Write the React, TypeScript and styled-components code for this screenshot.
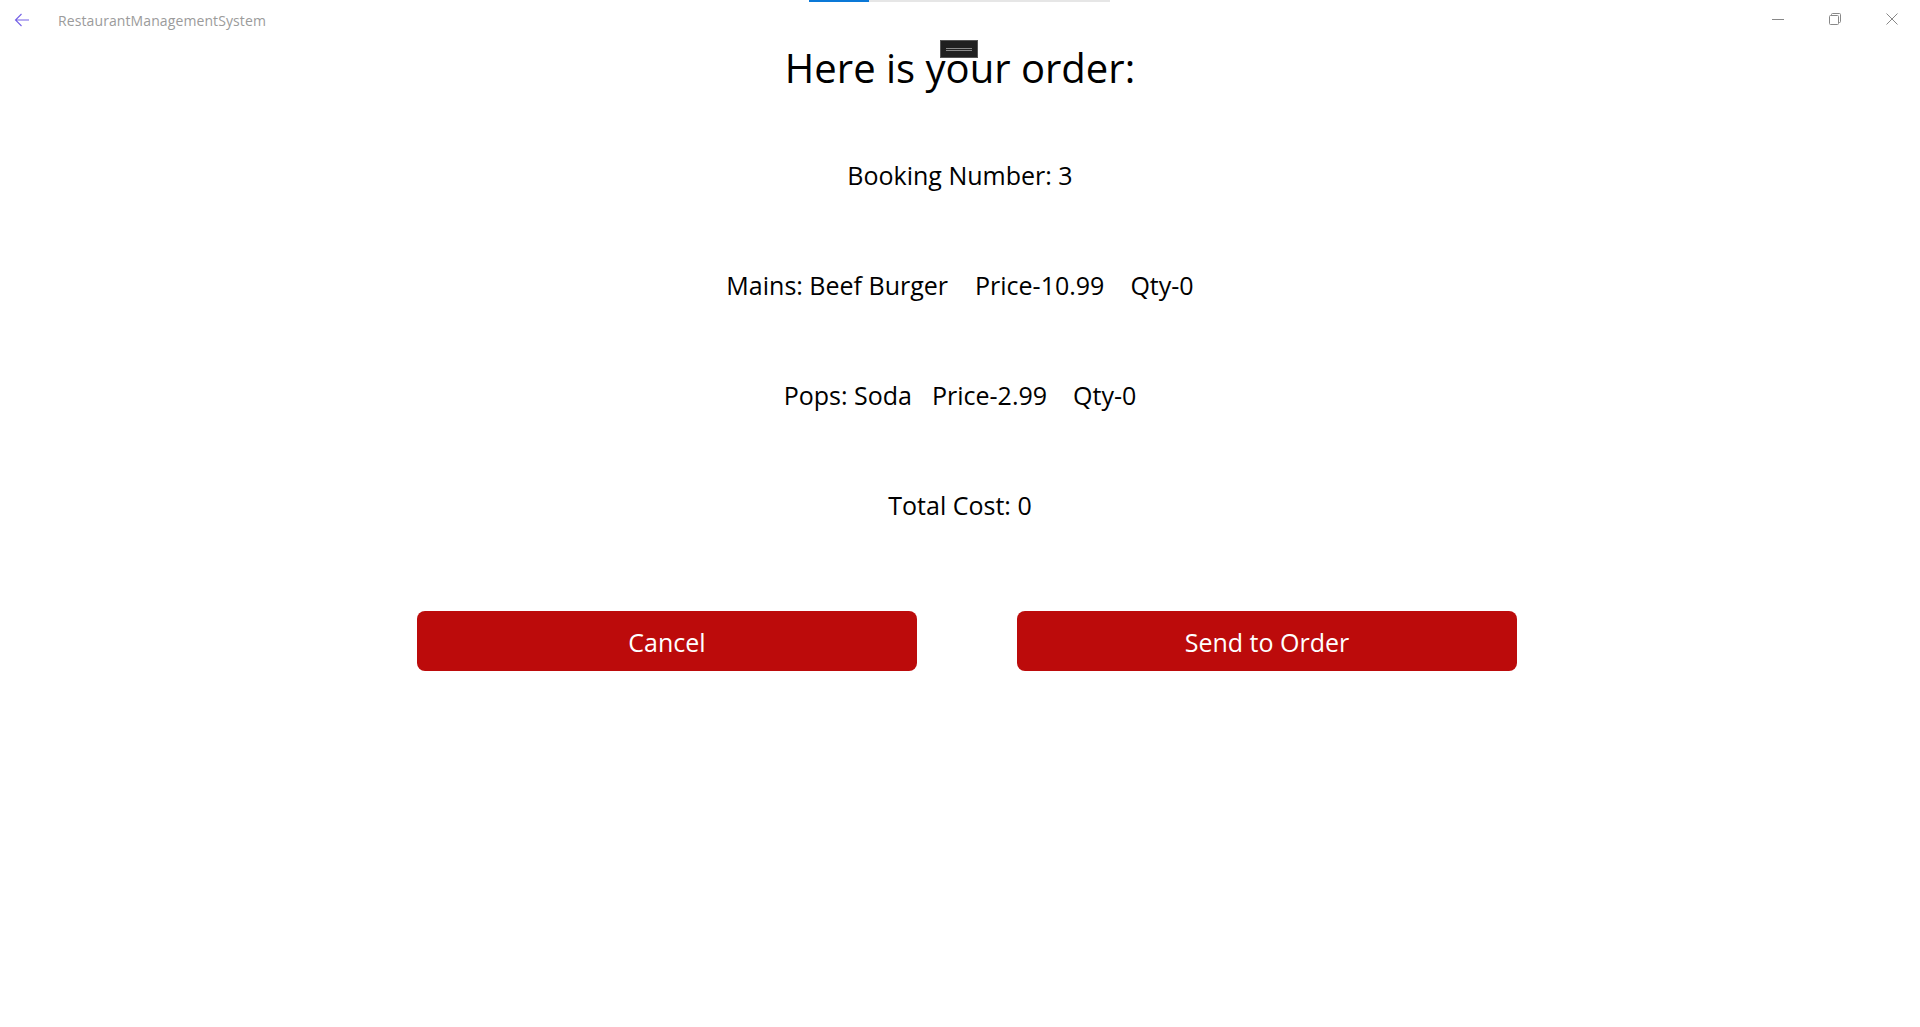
import styled, { createGlobalStyle } from 'styled-components';

const GlobalStyle = createGlobalStyle`
  html, body {
    margin: 0;
    padding: 0;
    background: #fff;
  }
  body {
    font-family: "Open Sans", "Noto Sans", sans-serif;
    color: #000;
  }
`;

const Window = styled.div`
  width: 1920px;
  height: 1027px;
  display: flex;
  flex-direction: column;
  background: #fff;
  overflow: hidden;
  position: relative;
`;

const TitleBar = styled.div`
  height: 40px;
  display: flex;
  align-items: center;
  flex-shrink: 0;
  position: relative;
`;

const BackButton = styled.div`
  width: 44px;
  height: 40px;
  display: flex;
  align-items: center;
  justify-content: center;
  margin-right: 14px;
  color: #7461e6;
`;

const AppName = styled.div`
  font-size: 14px;
  color: #9b9b9b;
  letter-spacing: 0.1px;
`;

const Controls = styled.div`
  margin-left: auto;
  display: flex;
  height: 38px;
  align-self: flex-start;
`;

const ControlButton = styled.div`
  width: 57px;
  height: 38px;
  display: flex;
  align-items: center;
  justify-content: center;
  color: #888;
`;

const LoadingTrack = styled.div`
  position: absolute;
  top: 0;
  left: 809px;
  width: 301px;
  height: 2px;
  background: #e6e6e6;
  .fill {
    width: 60px;
    height: 2px;
    background: #0a78d7;
  }
`;

const DragHandle = styled.div`
  position: absolute;
  top: 40px;
  left: 940px;
  width: 36px;
  height: 16px;
  background: #202020;
  border: 1px solid #555;
  display: flex;
  flex-direction: column;
  align-items: center;
  justify-content: center;
  gap: 1px;
  z-index: 1;
  span {
    display: block;
    width: 26px;
    height: 1px;
    background: #8a8a8a;
  }
`;

const Content = styled.div`
  display: flex;
  flex-direction: column;
  align-items: center;
`;

const Heading = styled.h1`
  margin: 0;
  font-size: 40px;
  font-weight: 400;
  line-height: 56px;
`;

const InfoList = styled.div`
  margin-top: 61px;
  display: flex;
  flex-direction: column;
  align-items: center;
  gap: 74px;
`;

const InfoRow = styled.div`
  display: flex;
  font-size: 25px;
  line-height: 36px;
  white-space: pre;
`;

const Segment = styled.span<{ $gap?: number }>`
  margin-left: ${(p) => p.$gap ?? 0}px;
`;

const ButtonRow = styled.div`
  margin-top: 88px;
  display: flex;
  gap: 100px;
  margin-left: 14px;
`;

const ActionButton = styled.button`
  width: 500px;
  height: 60px;
  border: none;
  border-radius: 8px;
  background: #bc0b0b;
  color: #fff;
  font-family: "Open Sans", "Noto Sans", sans-serif;
  font-size: 25px;
  padding: 2px 0 0;
  cursor: pointer;
`;

const rows: { label: string; gap: number }[][] = [
  [{ label: 'Booking Number: 3', gap: 0 }],
  [
    { label: 'Mains: Beef Burger', gap: 0 },
    { label: 'Price-10.99', gap: 27 },
    { label: 'Qty-0', gap: 26 }
  ],
  [
    { label: 'Pops: Soda', gap: 0 },
    { label: 'Price-2.99', gap: 20 },
    { label: 'Qty-0', gap: 26 }
  ],
  [{ label: 'Total Cost: 0', gap: 0 }]
];

const App: React.FC = () => {
  return (
    <Window>
      <GlobalStyle />
      <LoadingTrack>
        <div className="fill" />
      </LoadingTrack>
      <DragHandle>
        <span />
        <span />
      </DragHandle>
      <TitleBar>
        <BackButton>
          <svg width="16" height="16" viewBox="0 0 16 16" fill="none" stroke="currentColor" strokeWidth="1.1">
            <path d="M15 8H1.5M7.5 2L1.5 8l6 6" />
          </svg>
        </BackButton>
        <AppName>RestaurantManagementSystem</AppName>
        <Controls>
          <ControlButton>
            <svg width="12" height="12" viewBox="0 0 12 12" stroke="currentColor" strokeWidth="1">
              <path d="M0 6.5h12" />
            </svg>
          </ControlButton>
          <ControlButton>
            <svg width="12" height="12" viewBox="0 0 12 12" fill="none" stroke="currentColor" strokeWidth="1">
              <rect x="0.5" y="2.5" width="9" height="9" rx="1" />
              <path d="M2.5 2.5V1.5a1 1 0 0 1 1-1h7a1 1 0 0 1 1 1v7a1 1 0 0 1-1 1h-1" />
            </svg>
          </ControlButton>
          <ControlButton>
            <svg width="12" height="12" viewBox="0 0 12 12" stroke="currentColor" strokeWidth="1">
              <path d="M0.5 0.5l11 11M11.5 0.5l-11 11" />
            </svg>
          </ControlButton>
        </Controls>
      </TitleBar>
      <Content>
        <Heading>Here is your order:</Heading>
        <InfoList>
          {rows.map((row, i) => (
            <InfoRow key={i}>
              {row.map((seg, j) => (
                <Segment key={j} $gap={seg.gap}>
                  {seg.label}
                </Segment>
              ))}
            </InfoRow>
          ))}
        </InfoList>
        <ButtonRow>
          <ActionButton>Cancel</ActionButton>
          <ActionButton>Send to Order</ActionButton>
        </ButtonRow>
      </Content>
    </Window>
  );
};

export default App;
